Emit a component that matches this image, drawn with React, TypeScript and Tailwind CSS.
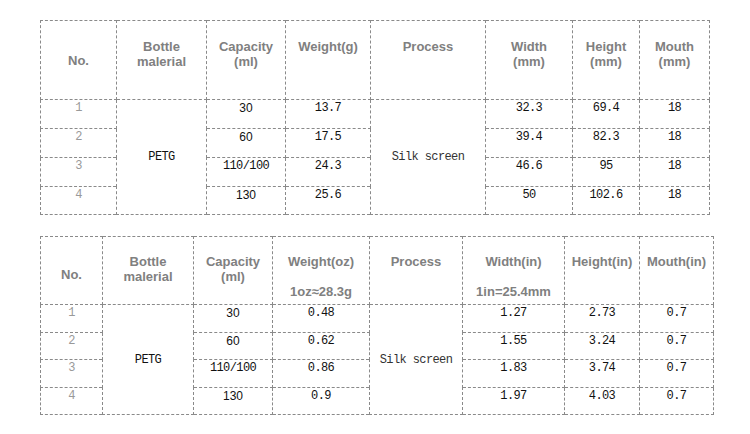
const head = "font-['Liberation_Sans',Arial,sans-serif] text-[13px] leading-[15px] font-bold text-[#808080]";
const mono = "font-['Liberation_Mono','Courier_New',monospace] text-[12px] leading-[14px] tracking-[-0.6px]";
const sans = "font-['Liberation_Sans',Arial,sans-serif] text-[12px] leading-[14px]";
const cell = "border border-dashed border-[#8a8a8a] text-center p-0";

type Row = { no: string; cap: string; w: string; wd: string; h: string; m: string };

const metric: Row[] = [
  { no: "1", cap: "30", w: "13.7", wd: "32.3", h: "69.4", m: "18" },
  { no: "2", cap: "60", w: "17.5", wd: "39.4", h: "82.3", m: "18" },
  { no: "3", cap: "110/100", w: "24.3", wd: "46.6", h: "95", m: "18" },
  { no: "4", cap: "130", w: "25.6", wd: "50", h: "102.6", m: "18" },
];

const imperial: Row[] = [
  { no: "1", cap: "30", w: "0.48", wd: "1.27", h: "2.73", m: "0.7" },
  { no: "2", cap: "60", w: "0.62", wd: "1.55", h: "3.24", m: "0.7" },
  { no: "3", cap: "110/100", w: "0.86", wd: "1.83", h: "3.74", m: "0.7" },
  { no: "4", cap: "130", w: "0.9", wd: "1.97", h: "4.03", m: "0.7" },
];

function capClass(v: string) {
  return v === "110/100" ? `${mono} text-[#111]` : `${sans} text-[#111]`;
}

function Body({ rows, heights }: { rows: Row[]; heights: string[] }) {
  return (
    <tbody>
      {rows.map((r, i) => (
        <tr key={r.no} className={heights[i]}>
          <td className={`${cell} align-top pt-px ${mono} text-[#999]`}>{r.no}</td>
          {i === 0 && (
            <td rowSpan={4} className={`${cell} align-middle ${mono} text-[#111]`}>
              PETG
            </td>
          )}
          <td className={`${cell} align-top pt-px ${capClass(r.cap)}`}>{r.cap}</td>
          <td className={`${cell} align-top pt-px ${mono} text-[#111]`}>{r.w}</td>
          {i === 0 && (
            <td rowSpan={4} className={`${cell} align-middle ${mono} text-[#333]`}>
              Silk screen
            </td>
          )}
          <td className={`${cell} align-top pt-px ${mono} text-[#111]`}>{r.wd}</td>
          <td className={`${cell} align-top pt-px ${mono} text-[#111]`}>{r.h}</td>
          <td className={`${cell} align-top pt-px ${mono} text-[#111]`}>{r.m}</td>
        </tr>
      ))}
    </tbody>
  );
}

export default function App() {
  return (
    <div className="min-h-[434px] w-[750px] bg-white pl-[40px] pt-[20px]">
      {/* metric table */}
      <table className="w-[669px] table-fixed border-collapse">
        <colgroup>
          <col className="w-[76px]" />
          <col className="w-[90px]" />
          <col className="w-[79px]" />
          <col className="w-[85px]" />
          <col className="w-[115px]" />
          <col className="w-[87px]" />
          <col className="w-[67px]" />
          <col className="w-[70px]" />
        </colgroup>
        <thead>
          <tr className="h-[79px]">
            <th className={`${cell} align-middle ${head}`}>No.</th>
            <th className={`${cell} align-top pt-[18px] ${head}`}>
              Bottle
              <br />
              malerial
            </th>
            <th className={`${cell} align-top pt-[18px] ${head}`}>
              Capacity
              <br />
              (ml)
            </th>
            <th className={`${cell} align-top pt-[18px] ${head}`}>Weight(g)</th>
            <th className={`${cell} align-top pt-[18px] ${head}`}>Process</th>
            <th className={`${cell} align-top pt-[18px] ${head}`}>
              Width
              <br />
              (mm)
            </th>
            <th className={`${cell} align-top pt-[18px] ${head}`}>
              Height
              <br />
              (mm)
            </th>
            <th className={`${cell} align-top pt-[18px] ${head}`}>
              Mouth
              <br />
              (mm)
            </th>
          </tr>
        </thead>
        <Body rows={metric} heights={["h-[29px]", "h-[29px]", "h-[29px]", "h-[28px]"]} />
      </table>

      {/* imperial table */}
      <table className="mt-[21px] w-[673px] table-fixed border-collapse">
        <colgroup>
          <col className="w-[62px]" />
          <col className="w-[91px]" />
          <col className="w-[79px]" />
          <col className="w-[97px]" />
          <col className="w-[93px]" />
          <col className="w-[102px]" />
          <col className="w-[75px]" />
          <col className="w-[74px]" />
        </colgroup>
        <thead>
          <tr className="h-[68px]">
            <th className={`${cell} align-middle pt-[8px] ${head}`}>No.</th>
            <th className={`${cell} align-top pt-[17px] ${head}`}>
              Bottle
              <br />
              malerial
            </th>
            <th className={`${cell} align-top pt-[17px] ${head}`}>
              Capacity
              <br />
              (ml)
            </th>
            <th className={`${cell} align-top pt-[17px] ${head}`}>
              Weight(oz)
              <br />
              <br />
              1oz≈28.3g
            </th>
            <th className={`${cell} align-top pt-[17px] ${head}`}>Process</th>
            <th className={`${cell} align-top pt-[17px] ${head}`}>
              Width(in)
              <br />
              <br />
              1in=25.4mm
            </th>
            <th className={`${cell} align-top pt-[17px] ${head}`}>Height(in)</th>
            <th className={`${cell} align-top pt-[17px] ${head}`}>Mouth(in)</th>
          </tr>
        </thead>
        <Body rows={imperial} heights={["h-[28px]", "h-[27px]", "h-[28px]", "h-[27px]"]} />
      </table>
    </div>
  );
}
